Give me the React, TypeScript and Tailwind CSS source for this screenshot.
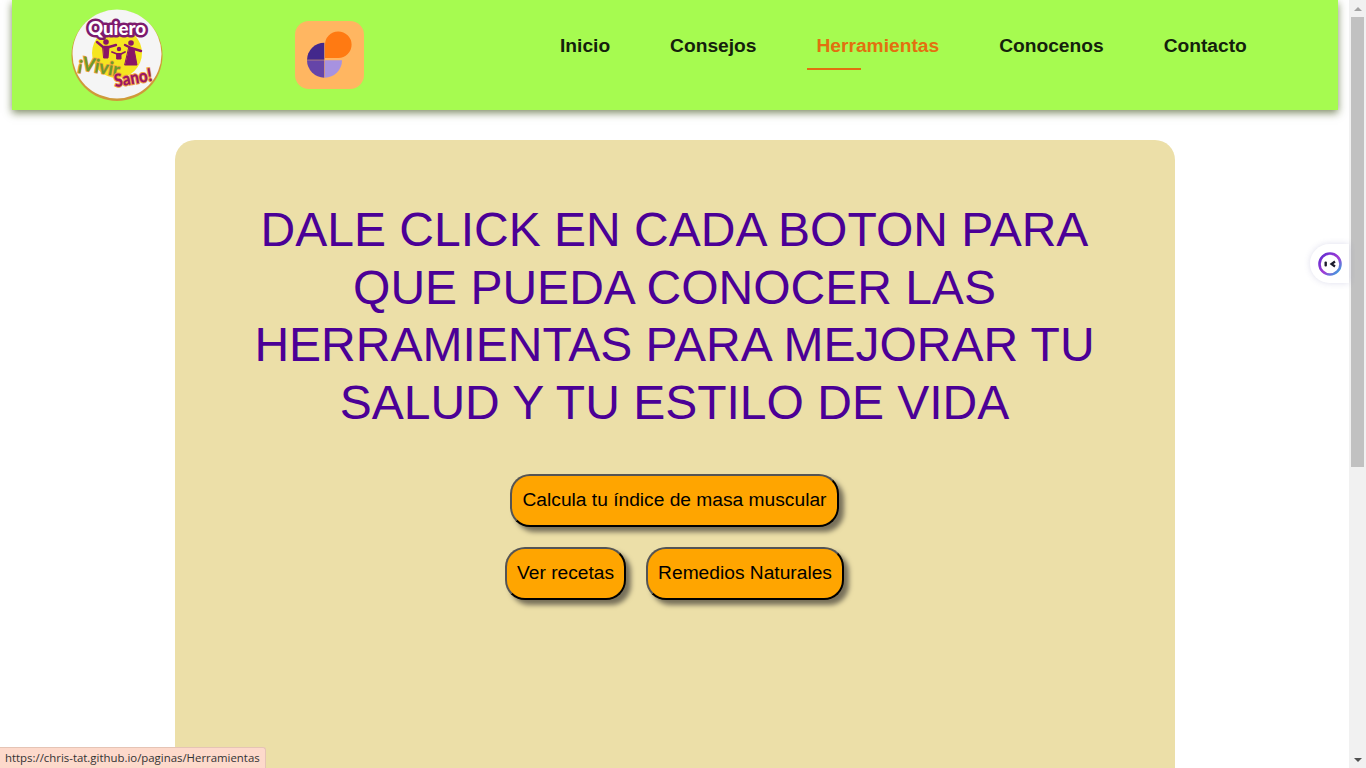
import React from 'react';

const navItems = ['Inicio', 'Consejos', 'Herramientas', 'Conocenos', 'Contacto'];

function SiteLogo() {
  return (
    <svg viewBox="0 0 92 92" className="w-[92px] h-[92px]">
      <circle cx="46" cy="46.5" r="45.5" fill="#cf9a3a" />
      <circle cx="46" cy="45" r="44.5" fill="#f5f5f5" />
      <circle cx="46" cy="44" r="25" fill="#f5e51f" />
      <g fill="#8a1466" stroke="#8a1466" strokeLinecap="round" strokeLinejoin="round">
        <circle cx="35" cy="33" r="2.8" stroke="none" />
        <path d="M26 33 L32 38 L38 38 L45 36" fill="none" strokeWidth="2.4" />
        <path d="M32 38 L38 38 L37 49 L33 49 Z" strokeWidth="1" />
        <circle cx="60" cy="34" r="2.8" stroke="none" />
        <path d="M54 36 L60 39 L70 42" fill="none" strokeWidth="2.4" />
        <path d="M58 39 L63 40 L66 56 L54 56 Z" strokeWidth="1" />
        <circle cx="48" cy="40" r="2.2" stroke="none" />
        <path d="M41 43 L46 45 L50 45 L54 43" fill="none" strokeWidth="1.8" />
        <path d="M46 45 L50 45 L50 50 L46 50 Z" strokeWidth="1" />
      </g>
      <text x="46" y="25.5" textAnchor="middle" textLength="58" lengthAdjust="spacingAndGlyphs" fontFamily="Lato, sans-serif" fontWeight="900" fontSize="18" fill="#fff" stroke="#7d1a6d" strokeWidth="5" strokeLinejoin="round" paintOrder="stroke">Quiero</text>
      <text x="27" y="64" textAnchor="middle" textLength="42" lengthAdjust="spacingAndGlyphs" fontFamily="Lato, sans-serif" fontWeight="700" fontSize="19" fill="#6c9a2a" stroke="#f0a040" strokeWidth="1.6" paintOrder="stroke" transform="rotate(10 27 64)">¡Vivir</text>
      <text x="63" y="75" textAnchor="middle" textLength="38" lengthAdjust="spacingAndGlyphs" fontFamily="Lato, sans-serif" fontWeight="900" fontSize="18" fill="#9c1464" stroke="#f0a040" strokeWidth="2" paintOrder="stroke" transform="rotate(-10 63 75)">Sano!</text>
    </svg>
  );
}

function PieIcon() {
  return (
    <div className="w-[69px] h-[68px] rounded-[14px] bg-[#ffb661]">
      <svg viewBox="0 0 69 68" className="w-[69px] h-[68px]">
        <path d="M30 24 A13.3 13.3 0 1 1 43.3 37 L30 37 Z" fill="#ff7a12" />
        <path d="M29.3 21.7 L29.3 38.8 L12 38.8 A17.3 17.3 0 0 1 29.3 21.7 Z" fill="#43288c" />
        <path d="M12 39.2 L29.3 39.2 L29.3 56.7 A17.5 17.5 0 0 1 12 39.2 Z" fill="#6545a8" />
        <path d="M29.8 39.2 L47 39.2 A17.3 17.3 0 0 1 29.8 56.7 Z" fill="#a792e0" />
      </svg>
    </div>
  );
}

function Scrollbar() {
  return (
    <div className="w-[17px] h-screen shrink-0 bg-[#f1f1f1] flex flex-col items-center">
      <div className="h-[17px] flex items-center justify-center">
        <div className="w-0 h-0 border-x-[4px] border-x-transparent border-b-[4px] border-b-[#a3a3a3]" />
      </div>
      <div className="w-[13px] h-[450px] bg-[#c1c1c1]" />
      <div className="flex-1" />
      <div className="h-[17px] flex items-center justify-center">
        <div className="w-0 h-0 border-x-[4px] border-x-transparent border-t-[4px] border-t-[#505050]" />
      </div>
    </div>
  );
}

function ActionButton({ label, className = '' }: { label: string; className?: string }) {
  return (
    <button className={`h-[53px] px-[10px] rounded-[20px] bg-[#ffa500] text-black text-[19.2px] border-2 border-black [border-style:outset] shadow-[5px_5px_5px_#77705a] ${className}`}>
      {label}
    </button>
  );
}

export default function App() {
  return (
    <div className="relative h-screen w-full flex overflow-hidden bg-white font-['Liberation_Sans',Arial,sans-serif]">
      <div className="flex-1 min-w-0">
        <header className="h-[110px] ml-3 mr-[11px] pl-[59px] flex items-center bg-[#a6fb50] shadow-[0_3px_8px_rgba(60,80,20,0.65)]">
          <SiteLogo />
          <div className="ml-[132px]">
            <PieIcon />
          </div>
          <nav className="ml-[186px] flex gap-[40px] h-full">
            {navItems.map((item) => {
              const active = item === 'Herramientas';
              return (
                <a
                  key={item}
                  href="#"
                  className={`relative px-[10px] pt-[35px] text-[19.2px] leading-[22px] font-bold ${active ? 'text-[#e2700f]' : 'text-[#14210c]'}`}
                >
                  {item}
                  {active && <span className="absolute left-[1px] top-[68px] h-[2px] w-[54px] bg-[#e2700f]" />}
                </a>
              );
            })}
          </nav>
        </header>

        <main className="mt-[30px] ml-[175px] w-[1000px] h-[700px] rounded-[20px] bg-[#ecdfa8] pt-[61px] pr-[1px] flex flex-col items-center">
          <h1 className="w-[880px] text-center text-[48px] leading-[57.6px] text-[#4b0096]">
            DALE CLICK EN CADA BOTON PARA QUE PUEDA CONOCER LAS HERRAMIENTAS PARA MEJORAR TU SALUD Y TU ESTILO DE VIDA
          </h1>
          <div className="mt-[43px]">
            <ActionButton label="Calcula tu índice de masa muscular" className="w-[329px]" />
          </div>
          <div className="mt-[20px] flex gap-[20px]">
            <ActionButton label="Ver recetas" />
            <ActionButton label="Remedios Naturales" />
          </div>
        </main>
      </div>

      <Scrollbar />

      {/* floating widget and browser status bubble sit over the page */}
      <div className="absolute left-[1310px] top-[244px] w-[39px] h-[39px] rounded-l-[20px] bg-white shadow-[0_0_6px_rgba(90,90,160,0.2)] flex items-center pl-[8px]">
        <svg viewBox="0 0 24 24" className="w-[24px] h-[24px]">
          <defs>
            <linearGradient id="ring" x1="0" y1="0" x2="1" y2="1">
              <stop offset="0" stopColor="#5a2bd0" />
              <stop offset="0.55" stopColor="#a23bd6" />
              <stop offset="1" stopColor="#27b5e0" />
            </linearGradient>
          </defs>
          <circle cx="12" cy="12" r="10.5" fill="#fff" stroke="url(#ring)" strokeWidth="2.6" />
          <rect x="6.5" y="9.5" width="2.4" height="5" rx="1" fill="#1c1c2c" />
          <path d="M17 9.5 L13.5 12 L17 14.5" fill="none" stroke="#1c1c2c" strokeWidth="2.2" />
        </svg>
      </div>
      <div className="absolute left-0 bottom-0 h-[21px] w-[266px] pl-[5px] bg-[#fdd9cb] border-t border-r border-[#e5c4b5] rounded-tr-[3px] text-[11.4px] leading-[20px] text-[#333] font-['Open_Sans',sans-serif] whitespace-nowrap">
        https://chris-tat.github.io/paginas/Herramientas
      </div>
    </div>
  );
}
